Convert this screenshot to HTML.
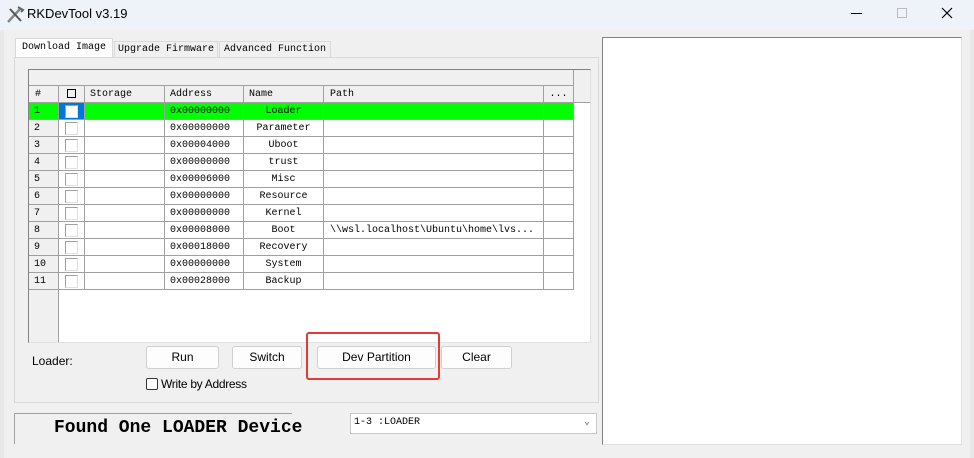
<!DOCTYPE html>
<html><head><meta charset="utf-8"><style>
*{margin:0;padding:0;box-sizing:border-box}
body{width:974px;height:458px;background:#f0f0f0;position:relative;overflow:hidden;font-family:"Liberation Sans",sans-serif}
.a{position:absolute}
.m{font-family:"Liberation Mono","Noto Sans CJK SC",monospace;font-size:10px;color:#000}
.c{position:absolute;height:17px;line-height:18px;border-right:1px solid #a0a0a0;border-bottom:1px solid #a0a0a0;white-space:nowrap;overflow:hidden}
.btn{position:absolute;height:23px;background:#fdfdfd;border:1px solid #d0d0d0;border-radius:3px;font-size:12px;text-align:center;line-height:21px;color:#000}
.cb{position:absolute;left:65px;width:13px;height:13px;border:1px solid #a0a0a0;background:#fff;border-right-color:#e0e0e0;border-bottom-color:#e0e0e0}
</style></head><body>
<div class="a" style="left:0;top:0;width:974px;height:30px;background:#eef3f9"></div>
<div class="a" style="left:4px;top:4px;width:22px;height:22px">
<svg width="22" height="22"><path d="M4 18 L16 5" stroke="#888" stroke-width="2.5"/><path d="M6 5 L17 17" stroke="#555" stroke-width="2"/><path d="M14 3 L19 6 L17 8" stroke="#666" stroke-width="2" fill="none"/></svg></div>
<div class="a" style="left:27px;top:6px;font-size:13px;color:#000">RKDevTool v3.19</div>
<div class="a" style="left:851px;top:13px;width:11px;height:1px;background:#000"></div>
<div class="a" style="left:897px;top:8px;width:10px;height:10px;border:1px solid #bbb"></div>
<svg class="a" style="left:941px;top:7px" width="12" height="12"><path d="M1 1 L11 11 M11 1 L1 11" stroke="#000" stroke-width="1.2"/></svg>

<div class="a m" style="left:15px;top:38px;width:98px;height:20px;background:#fff;border:1px solid #d9d9d9;border-bottom:none;line-height:18px;text-align:center">Download Image</div>
<div class="a m" style="left:114px;top:41px;width:104px;height:17px;border:1px solid #d9d9d9;border-bottom:none;line-height:16px;text-align:center">Upgrade Firmware</div>
<div class="a m" style="left:219px;top:41px;width:112px;height:17px;border:1px solid #d9d9d9;border-bottom:none;line-height:16px;text-align:center">Advanced Function</div>
<div class="a" style="left:14px;top:57px;width:585px;height:346px;border:1px solid #d9d9d9;background:#f0f0f0"></div>

<div class="a" style="left:28px;top:69px;width:563px;height:274px;background:#fff;border:1px solid #828282;border-right:1px solid #e0e0e0;border-bottom-color:#e0e0e0"></div>
<div class="a" style="left:29px;top:70px;width:545px;height:16px;background:#f0f0f0;border-bottom:1px solid #a0a0a0;border-right:1px solid #a0a0a0"></div>
<div class="a" style="left:574px;top:70px;width:16px;height:33px;background:#f0f0f0;border-bottom:1px solid #a0a0a0"></div>
<div class="a" style="left:29px;top:86px;width:30px;height:256px;background:#f0f0f0;border-right:1px solid #a0a0a0"></div>
<div class="m">
<div class="c" style="left:29px;top:86px;width:30px;background:#f0f0f0;padding-left:6px">#</div>
<div class="c" style="left:59px;top:86px;width:26px;background:#f0f0f0;text-align:center"><span style="display:inline-block;width:9px;height:9px;border:1px solid #000;vertical-align:middle"></span></div>
<div class="c" style="left:85px;top:86px;width:80px;background:#f0f0f0;padding-left:5px">Storage</div>
<div class="c" style="left:165px;top:86px;width:79px;background:#f0f0f0;padding-left:5px">Address</div>
<div class="c" style="left:244px;top:86px;width:80px;background:#f0f0f0;padding-left:5px">Name</div>
<div class="c" style="left:324px;top:86px;width:220px;background:#f0f0f0;padding-left:6px">Path</div>
<div class="c" style="left:544px;top:86px;width:30px;background:#f0f0f0;text-align:center">...</div>
<div class="a" style="left:29px;top:103px;width:545px;height:17px;background:#00ff00"></div>
</div>
<div class="m" id="rows"></div>
<script>
var d=[["0x00000000","Loader",""],["0x00000000","Parameter",""],["0x00004000","Uboot",""],["0x00000000","trust",""],["0x00006000","Misc",""],["0x00000000","Resource",""],["0x00000000","Kernel",""],["0x00008000","Boot","\\\\wsl.localhost\\Ubuntu\\home\\lvs..."],["0x00018000","Recovery",""],["0x00000000","System",""],["0x00028000","Backup",""]];
var h="";
d.forEach(function(r,i){var t=103+i*17;
h+='<div class="c" style="left:29px;top:'+t+'px;width:30px;padding-left:5px;'+(i==0?'background:#00ff00;':'background:#f0f0f0;')+'">'+(i+1)+'</div>';
h+='<div class="c" style="left:59px;top:'+t+'px;width:26px;'+(i==0?'background:#0078d7;':'')+'"></div>';
h+='<div class="cb" style="top:'+(t+2)+'px"></div>';
h+='<div class="c" style="left:85px;top:'+t+'px;width:80px"></div>';
h+='<div class="c" style="left:165px;top:'+t+'px;width:79px;padding-left:5px">'+r[0]+'</div>';
h+='<div class="c" style="left:244px;top:'+t+'px;width:80px;text-align:center">'+r[1]+'</div>';
h+='<div class="c" style="left:324px;top:'+t+'px;width:220px;padding-left:6px">'+r[2]+'</div>';
h+='<div class="c" style="left:544px;top:'+t+'px;width:30px"></div>';});
document.getElementById("rows").innerHTML=h;
</script>

<div class="a" style="left:32px;top:354px;font-size:12px">Loader:</div>
<div class="btn" style="left:146px;top:346px;width:73px">Run</div>
<div class="btn" style="left:232px;top:346px;width:70px">Switch</div>
<div class="btn" style="left:317px;top:346px;width:119px">Dev Partition</div>
<div class="btn" style="left:441px;top:346px;width:71px">Clear</div>
<div class="a" style="left:306px;top:332px;width:134px;height:48px;border:2px solid #e53935;border-radius:3px"></div>
<div class="a" style="left:146px;top:378px;width:12px;height:12px;border:1px solid #333;border-radius:2px;background:#fff"></div>
<div class="a" style="left:161px;top:377px;font-size:12px;letter-spacing:-0.3px">Write by Address</div>

<div class="a" style="left:14px;top:413px;width:278px;height:31px;border-top:1px solid #a0a0a0;border-left:1px solid #a0a0a0;background:#f0f0f0;font-family:'Liberation Mono',monospace;font-weight:bold;font-size:18px;line-height:29px;padding-left:39px;white-space:nowrap">Found One LOADER Device</div>
<div class="a m" style="left:350px;top:413px;width:247px;height:21px;background:#fff;border:1px solid #c8c8c8;line-height:18px;padding-left:3px">1-3 :LOADER<span style="position:absolute;right:6px;top:0;color:#666">&#8964;</span></div>

<div class="a" style="left:602px;top:37px;width:360px;height:408px;background:#fff;border:1px solid #828282;border-right-color:#e0e0e0;border-bottom-color:#e0e0e0"></div>
<div class="a" style="left:0;top:30px;width:4px;height:428px;background:#e8e8e8"></div>
<div class="a" style="left:970px;top:30px;width:4px;height:428px;background:#e8e8e8"></div>
</body></html>
